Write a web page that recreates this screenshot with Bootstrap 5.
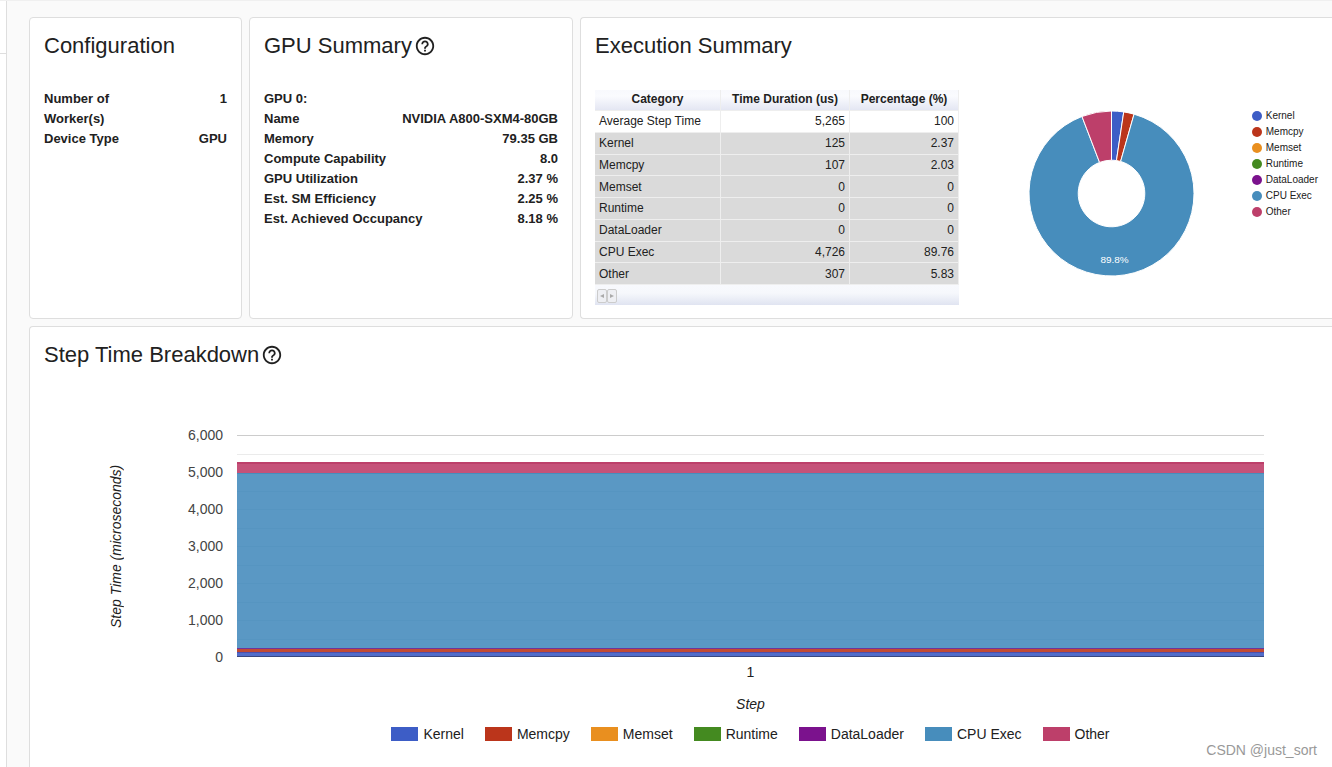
<!DOCTYPE html>
<html lang="en">
<head>
<meta charset="utf-8">
<meta name="viewport" content="width=device-width, initial-scale=1">
<title>GPU profile overview</title>
<link href="https://cdn.jsdelivr.net/npm/bootstrap@5.3.0/dist/css/bootstrap.min.css" rel="stylesheet">
<style>
  :root {
    --kernel: #3d5dc6; --memcpy: #bb351b; --memset: #e98f1f; --runtime: #448a20;
    --loader: #7b128d; --cpu: #478dbc; --other: #bd3f6a;
  }
  body { background: #fafafa; color: #212121; font-family: "Liberation Sans", Arial, sans-serif; font-size: 13px; line-height: 20px; }
  .page { min-height: 100vh; border-top: 1px solid #f0f0f0; }
  .side-strip { flex: 0 0 7px; border-right: 1px solid #dedede; }
  .side-head { height: 53px; background: #fff; border-bottom: 1px solid #dedede; }
  .side-rest { background: #fff; }
  .content { padding: 16px 0 0 22px; gap: 7px; min-width: 0; }
  .panels { display: grid; grid-template-columns: minmax(0, 213fr) minmax(0, 324fr) minmax(0, 752fr); gap: 7px; }
  .panel { --bs-card-border-color: #dedede; --bs-card-border-radius: 4px; --bs-card-color: #212121; --bs-card-bg: #fff; padding: 14px 14px 13px; }
  .open-end { border-right: 0; border-top-right-radius: 0; border-bottom-right-radius: 0; }
  .open-bottom { border-bottom: 0; border-bottom-left-radius: 0; }
  .panel-title { font-size: 22px; line-height: 28px; font-weight: 400; margin: 0 0 30px; gap: 2px; }
  .facts { font-weight: 700; margin-top: -1px; }
  .summary-box { width: 364px; background: linear-gradient(#f8f9fd, #f6f8fc 40%, #e0e4f1) bottom / 100% 20px no-repeat; }
  .summary { width: 100%; height: 195px; font-size: 12px; line-height: 16px; border-collapse: separate; border-spacing: 0; background: #fff; }
  .summary th, .summary td { border: 1px solid #eee; border-left: 0; border-top: 0; padding: 0 4px; }
  .summary thead { background: linear-gradient(#f8f9fd, #fafbfe 30%, #e2e5f2); }
  .summary thead th { height: 21px; padding-bottom: 2px; text-align: center; }
  .summary tbody th { font-weight: 400; text-align: left; }
  .summary tr.shaded { background: #dadada; }
  .pager { height: 20px; padding: 4px 2px; }
  .page-btn { width: 10px; height: 14px; border: 1px solid #ccc; background: #eeeff3; border-radius: 2px; padding: 0; display: flex; align-items: center; justify-content: center; }
  .donut { margin: 21px 0 0 70px; }
  .donut-legend { font-size: 10px; line-height: 16px; margin: 18px 0 0; }
  .dot { width: 10px; height: 10px; border-radius: 50%; }
  .chart { font-size: 14px; margin-top: 18px; padding: 0 54px 0 58px; }
  .axis-name { font-style: italic; line-height: 28px; }
  .y-name { writing-mode: vertical-rl; transform: rotate(180deg); text-align: center; }
  .ticks { width: 93px; line-height: 37px; color: #444; }
  .plot { padding: 18px 0 0 14px; }
  .plot svg { display: block; width: 100%; height: 223px; }
  .x-side { padding-left: 135px; margin-top: -14px; text-align: center; }
  .chart-legend { gap: 21px; margin-top: 6px; white-space: nowrap; }
  .chart-legend > div { gap: 5px; }
  .swatch { width: 27px; height: 14px; }
  .watermark { position: absolute; right: 15px; bottom: 7px; font-size: 14px; color: #999; }
</style>
</head>
<body>
<div class="page d-flex overflow-hidden position-relative">
  <div class="side-strip d-flex flex-column"><div class="side-head"></div><div class="side-rest flex-grow-1"></div></div>
  <main class="content d-flex flex-column flex-grow-1">
    <div class="panels">
      <section class="card panel">
        <h2 class="panel-title">Configuration</h2>
        <div class="facts">
          <div class="d-flex justify-content-between"><span class="w-50">Number of Worker(s)</span><span>1</span></div>
          <div class="d-flex justify-content-between"><span>Device Type</span><span>GPU</span></div>
        </div>
      </section>

      <section class="card panel">
        <h2 class="panel-title d-flex align-items-center">GPU Summary
          <svg width="22" height="22" viewBox="0 0 24 24" fill="currentColor" aria-hidden="true"><path d="M11 18h2v-2h-2v2zm1-16C6.48 2 2 6.48 2 12s4.48 10 10 10 10-4.48 10-10S17.52 2 12 2zm0 18c-4.41 0-8-3.59-8-8s3.59-8 8-8 8 3.59 8 8-3.59 8-8 8zm0-14c-2.21 0-4 1.79-4 4h2c0-1.1.9-2 2-2s2 .9 2 2c0 2-3 1.75-3 5h2c0-2.25 3-2.5 3-5 0-2.21-1.79-4-4-4z"/></svg>
        </h2>
        <div class="facts">
          <div>GPU 0:</div>
          <div class="d-flex justify-content-between"><span>Name</span><span>NVIDIA A800-SXM4-80GB</span></div>
          <div class="d-flex justify-content-between"><span>Memory</span><span>79.35 GB</span></div>
          <div class="d-flex justify-content-between"><span>Compute Capability</span><span>8.0</span></div>
          <div class="d-flex justify-content-between"><span>GPU Utilization</span><span>2.37 %</span></div>
          <div class="d-flex justify-content-between"><span>Est. SM Efficiency</span><span>2.25 %</span></div>
          <div class="d-flex justify-content-between"><span>Est. Achieved Occupancy</span><span>8.18 %</span></div>
        </div>
      </section>

      <section class="card panel open-end">
        <h2 class="panel-title">Execution Summary</h2>
        <div class="d-flex align-items-start">
          <div class="summary-box flex-shrink-0">
            <table class="summary">
              <colgroup><col style="width:126px"><col style="width:129px"><col style="width:109px"></colgroup>
              <thead><tr><th scope="col">Category</th><th scope="col">Time Duration (us)</th><th scope="col">Percentage (%)</th></tr></thead>
              <tbody>
                <tr><th scope="row">Average Step Time</th><td class="text-end">5,265</td><td class="text-end">100</td></tr>
                <tr class="shaded"><th scope="row">Kernel</th><td class="text-end">125</td><td class="text-end">2.37</td></tr>
                <tr class="shaded"><th scope="row">Memcpy</th><td class="text-end">107</td><td class="text-end">2.03</td></tr>
                <tr class="shaded"><th scope="row">Memset</th><td class="text-end">0</td><td class="text-end">0</td></tr>
                <tr class="shaded"><th scope="row">Runtime</th><td class="text-end">0</td><td class="text-end">0</td></tr>
                <tr class="shaded"><th scope="row">DataLoader</th><td class="text-end">0</td><td class="text-end">0</td></tr>
                <tr class="shaded"><th scope="row">CPU Exec</th><td class="text-end">4,726</td><td class="text-end">89.76</td></tr>
                <tr class="shaded"><th scope="row">Other</th><td class="text-end">307</td><td class="text-end">5.83</td></tr>
              </tbody>
            </table>
            <div class="pager d-flex">
              <button class="page-btn" type="button" aria-label="Previous page" disabled><svg width="4" height="4" viewBox="0 0 4 4"><path d="M0 2L4 0V4Z" fill="#aaa"/></svg></button>
              <button class="page-btn" type="button" aria-label="Next page" disabled><svg width="4" height="4" viewBox="0 0 4 4"><path d="M4 2L0 0V4Z" fill="#aaa"/></svg></button>
            </div>
          </div>
          <!-- Slices run clockwise from twelve o'clock; the centre is 0,0 -->
          <svg class="donut flex-shrink-0" width="165" height="165" viewBox="-83 -83 166 166" role="img" aria-label="Share of step time">
            <g stroke="#fff" stroke-width="1">
              <path fill="var(--kernel)" d="M0-83A83 83 0 0 1 12.31-82.08L4.97-33.13A33.5 33.5 0 0 0 0-33.5Z"/>
              <path fill="var(--memcpy)" d="M12.31-82.08A83 83 0 0 1 22.69-79.84L9.16-32.23A33.5 33.5 0 0 0 4.97-33.13Z"/>
              <path fill="var(--cpu)" d="M22.69-79.84A83 83 0 1 1-29.72-77.5L-12-31.28A33.5 33.5 0 1 0 9.16-32.23Z"/>
              <path fill="var(--other)" d="M-29.72-77.5A83 83 0 0 1 0-83V-33.5A33.5 33.5 0 0 0-12-31.28Z"/>
            </g>
            <text x="3" y="70" text-anchor="middle" font-size="10" fill="#fff">89.8%</text>
          </svg>
          <ul class="donut-legend list-unstyled ms-auto">
            <li class="d-flex align-items-center gap-1"><span class="dot" style="background:var(--kernel)"></span>Kernel</li>
            <li class="d-flex align-items-center gap-1"><span class="dot" style="background:var(--memcpy)"></span>Memcpy</li>
            <li class="d-flex align-items-center gap-1"><span class="dot" style="background:var(--memset)"></span>Memset</li>
            <li class="d-flex align-items-center gap-1"><span class="dot" style="background:var(--runtime)"></span>Runtime</li>
            <li class="d-flex align-items-center gap-1"><span class="dot" style="background:var(--loader)"></span>DataLoader</li>
            <li class="d-flex align-items-center gap-1"><span class="dot" style="background:var(--cpu)"></span>CPU Exec</li>
            <li class="d-flex align-items-center gap-1"><span class="dot" style="background:var(--other)"></span>Other</li>
          </ul>
        </div>
      </section>
    </div>

    <section class="card panel open-end open-bottom flex-grow-1">
      <h2 class="panel-title d-flex align-items-center">Step Time Breakdown
        <svg width="22" height="22" viewBox="0 0 24 24" fill="currentColor" aria-hidden="true"><path d="M11 18h2v-2h-2v2zm1-16C6.48 2 2 6.48 2 12s4.48 10 10 10 10-4.48 10-10S17.52 2 12 2zm0 18c-4.41 0-8-3.59-8-8s3.59-8 8-8 8 3.59 8 8-3.59 8-8 8zm0-14c-2.21 0-4 1.79-4 4h2c0-1.1.9-2 2-2s2 .9 2 2c0 2-3 1.75-3 5h2c0-2.25 3-2.5 3-5 0-2.21-1.79-4-4-4z"/></svg>
      </h2>
      <div class="chart">
        <div class="d-flex">
          <div class="axis-name y-name">Step Time (microseconds)</div>
          <div class="ticks text-end"><div>6,000</div><div>5,000</div><div>4,000</div><div>3,000</div><div>2,000</div><div>1,000</div><div>0</div></div>
          <div class="plot flex-grow-1">
            <!-- 37 units of height stand for 1,000 microseconds -->
            <svg viewBox="0 0 100 223" preserveAspectRatio="none" shape-rendering="crispEdges" role="img" aria-label="Stacked step time">
              <path fill="#ccc" d="M0 0H100V1H0Z"/>
              <path fill="#ebebeb" d="M0 19H100V20H0Z"/>
              <path fill="#c55279" d="M0 27H100V38H0Z"/>
              <path fill="var(--other)" d="M0 27H100V29H0Z"/>
              <path fill="#5a98c4" d="M0 38H100V213H0Z"/>
              <path fill="#478dbc" d="M0 38H100V39H0Z"/>
              <path fill="#5695c1" d="M0 56H100V57H0ZM0 74H100V75H0ZM0 93H100V94H0ZM0 111H100V112H0ZM0 130H100V131H0ZM0 148H100V149H0ZM0 167H100V168H0ZM0 185H100V186H0ZM0 204H100V205H0Z"/>
              <path fill="#70349a" d="M0 213H100V214H0Z"/>
              <path fill="#c24a33" d="M0 214H100V217H0Z"/>
              <path fill="#4c4fae" d="M0 217H100V218H0Z"/>
              <path fill="#526dca" d="M0 218H100V221H0Z"/>
              <path fill="#39477f" d="M0 221H100V222H0Z"/>
            </svg>
          </div>
        </div>
        <div class="x-side">
          <div class="mb-2">1</div>
          <div class="axis-name">Step</div>
          <div class="chart-legend d-flex justify-content-center">
            <div class="d-flex align-items-center"><span class="swatch" style="background:var(--kernel)"></span>Kernel</div>
            <div class="d-flex align-items-center"><span class="swatch" style="background:var(--memcpy)"></span>Memcpy</div>
            <div class="d-flex align-items-center"><span class="swatch" style="background:var(--memset)"></span>Memset</div>
            <div class="d-flex align-items-center"><span class="swatch" style="background:var(--runtime)"></span>Runtime</div>
            <div class="d-flex align-items-center"><span class="swatch" style="background:var(--loader)"></span>DataLoader</div>
            <div class="d-flex align-items-center"><span class="swatch" style="background:var(--cpu)"></span>CPU Exec</div>
            <div class="d-flex align-items-center"><span class="swatch" style="background:var(--other)"></span>Other</div>
          </div>
        </div>
      </div>
    </section>
  </main>
  <div class="watermark">CSDN @just_sort</div>
</div>
<script src="https://cdn.jsdelivr.net/npm/bootstrap@5.3.0/dist/js/bootstrap.bundle.min.js"></script>
</body>
</html>
